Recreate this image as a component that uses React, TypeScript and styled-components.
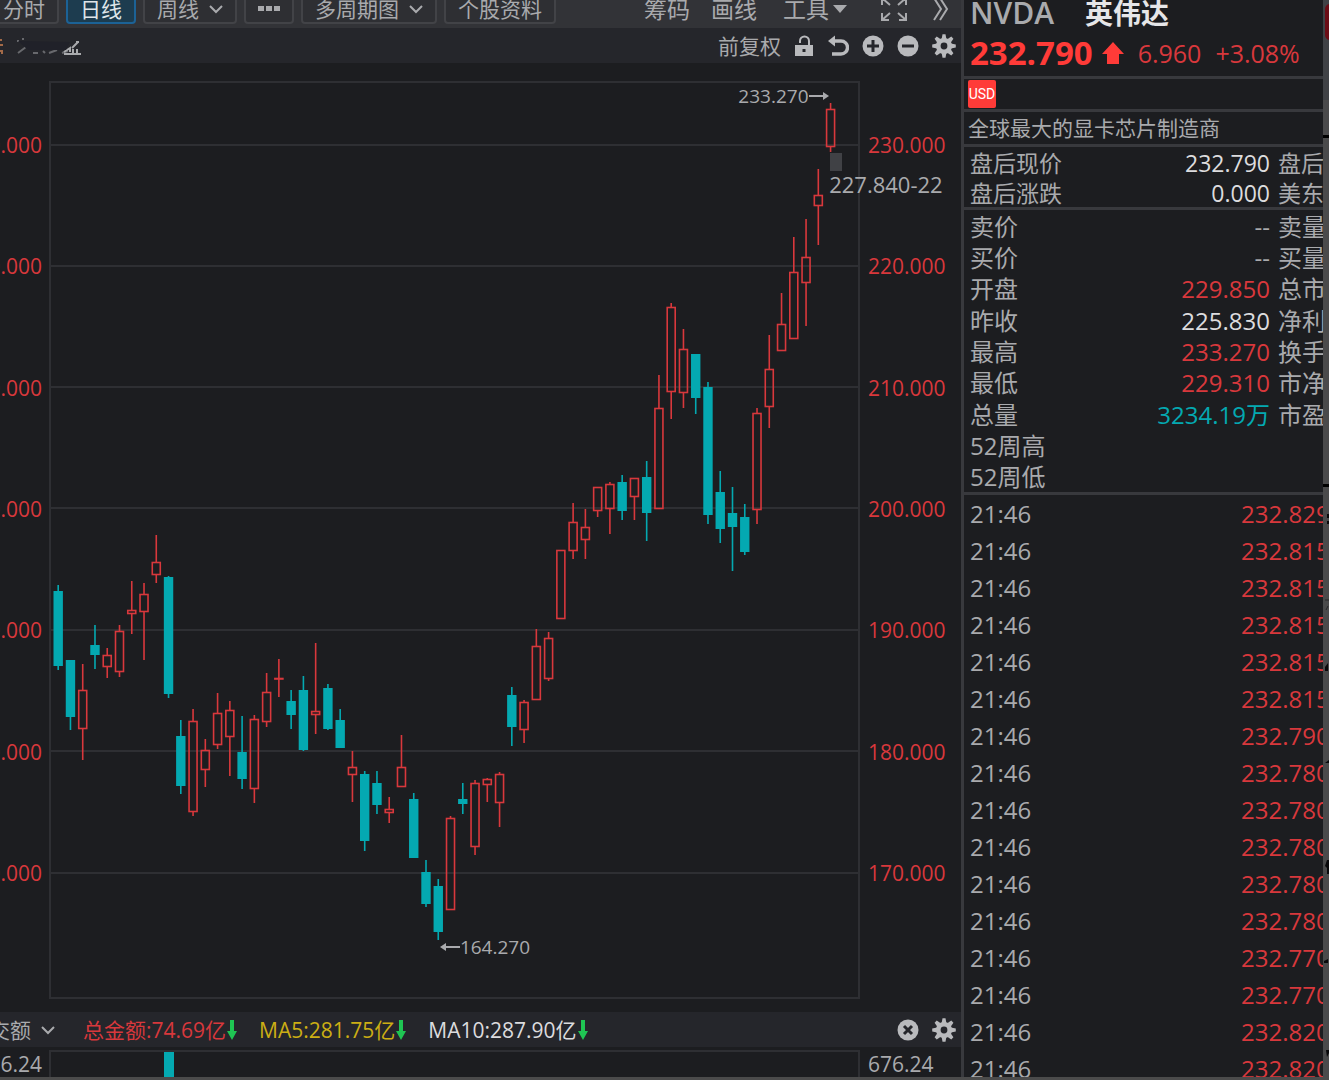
import React from "react";
import styled, { createGlobalStyle } from "styled-components";

const color = {
  bg: "#1c1d20",
  bar: "#25262b",
  toolbar: "#323337",
  line: "#38393d",
  grid: "#2e2f33",
  text: "#a9aaad",
  bright: "#dcdcde",
  red: "#d8383c",
  hot: "#ff3b38",
  teal: "#04a9b1",
  yellow: "#ccae14",
  green: "#1fc553",
};

const Global = createGlobalStyle`
  * { box-sizing: border-box; }
  body { margin: 0; background: #4b4b4b; }
  button { font: inherit; color: inherit; }
`;

const Screen = styled.div`
  display: grid;
  grid-template-columns: minmax(0, 1fr) 362px 6px;
  height: 100vh;
  padding-bottom: 3px;
  overflow: hidden;
  background: #4b4b4b;
  color: ${color.text};
  font-family: "Open Sans", "Noto Sans CJK SC", sans-serif;
  font-size: 21px;
  line-height: 30px;
  white-space: nowrap;
`;

const Main = styled.main`
  display: flex;
  flex-direction: column;
  min-width: 0;
  min-height: 0;
  background: ${color.bg};
`;

const Toolbar = styled.nav`
  display: flex;
  flex: none;
  align-items: flex-end;
  justify-content: space-between;
  height: 28px;
  padding: 0 12px 4px 0;
  overflow: hidden;
  background: ${color.toolbar};
`;

const Periods = styled.div`
  display: flex;
  gap: 7px;
  margin-left: -11px;
`;

const PeriodButton = styled.button<{ $active?: boolean }>`
  display: flex;
  align-items: center;
  gap: 10px;
  height: 30px;
  padding: 0 12px;
  border: 2px solid ${(p) => (p.$active ? "#1c6296" : "#424347")};
  border-radius: 4px;
  background: ${(p) => (p.$active ? "#1d3c4f" : "#2e2f33")};
  color: ${(p) => (p.$active ? "#dfe5e9" : color.text)};
`;

const Tools = styled.div`
  display: flex;
  align-items: center;
  gap: 21px;
  height: 30px;
  font-size: 23px;
`;

const ToolButton = styled.button`
  display: flex;
  align-items: center;
  gap: 4px;
  padding: 0;
  border: 0;
  background: none;
`;

const ToolGroup = styled.div`
  display: flex;
  align-items: center;
  gap: 26px;
`;

const ToolEnd = styled.div`
  display: flex;
  align-items: center;
  gap: 25px;
  margin-left: 12px;
`;

const PaneBar = styled.div`
  display: flex;
  flex: none;
  align-items: center;
  justify-content: space-between;
  height: 35px;
  padding: 0 5px 0 0;
  background: ${color.bar};
`;

const IconRow = styled.div`
  display: flex;
  align-items: center;
  gap: 13px;
`;

const IconButton = styled.button`
  display: flex;
  padding: 0;
  border: 0;
  background: none;
  color: #b9babd;
`;

const Pane = styled.section`
  display: grid;
  grid-template-columns: 49px minmax(0, 1fr) 101px;
  flex: 1;
  min-height: 0;
`;

const Axis = styled.div<{ $side: "left" | "right" }>`
  display: flex;
  flex-direction: column;
  align-items: ${(p) => (p.$side === "left" ? "flex-end" : "flex-start")};
  justify-content: space-between;
  padding: ${(p) => (p.$side === "left" ? "67px 7px 124px 0" : "67px 0 124px 8px")};
  overflow: hidden;
  color: ${color.red};
`;

const Plot = styled.div`
  position: relative;
  margin: 18px 0 13px;
  min-height: 0;
`;

const Canvas = styled.svg`
  display: block;
  width: 100%;
  height: 100%;
`;

const Mark = styled.div<{ $left: string; $top: string; $large?: boolean }>`
  position: absolute;
  left: ${(p) => p.$left};
  top: ${(p) => p.$top};
  display: flex;
  align-items: center;
  font-size: ${(p) => (p.$large ? 22 : 19)}px;
`;

const VolumePane = styled.section`
  display: grid;
  grid-template-columns: 49px minmax(0, 1fr) 101px;
  flex: none;
  height: 30px;
  overflow: hidden;
`;

const VolumePlot = styled.div`
  margin-top: 3px;
  border: 2px solid ${color.grid};
  border-bottom: 0;
  padding-left: 113px;
`;

const VolumeBar = styled.div`
  width: 10px;
  height: 27px;
  background: ${color.teal};
`;

const VolumeLabel = styled.div<{ $side: "left" | "right" }>`
  display: flex;
  justify-content: ${(p) => (p.$side === "left" ? "flex-end" : "flex-start")};
  padding: ${(p) => (p.$side === "left" ? "2px 7px 0 0" : "2px 0 0 8px")};
`;

const Legend = styled.div`
  display: flex;
  align-items: center;
  gap: 22px;
`;

const LegendSelect = styled.button`
  display: flex;
  align-items: center;
  gap: 10px;
  margin-left: -32px;
  padding: 0 6px 0 0;
  border: 0;
  background: none;
`;

const LegendItem = styled.span<{ $color: string }>`
  display: flex;
  align-items: center;
  gap: 1px;
  color: ${(p) => p.$color};
`;

const Side = styled.aside`
  display: flex;
  flex-direction: column;
  min-height: 0;
  overflow: hidden;
  border-left: 3px solid ${color.line};
  background: ${color.bg};
`;

const SideBlock = styled.div<{ $height: number }>`
  display: flex;
  flex: none;
  align-items: center;
  height: ${(p) => p.$height}px;
  padding-left: 4px;
  border-bottom: 3px solid ${color.line};
`;

const Head = styled.header`
  flex: none;
  padding-left: 6px;
  border-bottom: 3px solid ${color.line};
`;

const NameRow = styled.div`
  display: flex;
  align-items: center;
  gap: 31px;
  height: 26px;
  line-height: 26px;
`;

const Ticker = styled.span`
  font-size: 30px;
  font-weight: 600;
`;

const Company = styled.h1`
  margin: 0;
  color: #e6e6e8;
  font-size: 28px;
  font-weight: 700;
`;

const PriceRow = styled.div`
  display: flex;
  align-items: center;
  gap: 9px;
  height: 50px;
  padding-top: 4px;
  color: ${color.red};
  font-size: 25px;
`;

const Price = styled.strong`
  color: ${color.hot};
  font-size: 33px;
`;

const Change = styled.span`
  margin-left: 5px;
`;

const Currency = styled.span`
  width: 28px;
  height: 28px;
  border-radius: 2px;
  background: ${color.hot};
  color: #fff;
  font-family: "Liberation Sans Narrow", "Roboto", sans-serif;
  font-size: 14px;
  line-height: 28px;
  text-align: center;
`;

const Quotes = styled.table<{ $height: number; $size: number }>`
  flex: none;
  width: 100%;
  height: ${(p) => p.$height}px;
  table-layout: fixed;
  border-collapse: collapse;
  border-bottom: 3px solid ${color.line};
  font-size: ${(p) => p.$size}px;
`;

const QuoteLabel = styled.th`
  width: 110px;
  padding: 2px 0 0 6px;
  font-weight: 400;
  line-height: 28px;
  text-align: left;
`;

const QuoteValue = styled.td<{ $color?: string }>`
  padding: 2px 0 0;
  color: ${(p) => p.$color || color.text};
  line-height: 28px;
  text-align: right;
`;

const QuoteNext = styled.th`
  width: 53px;
  padding: 2px 0 0 8px;
  overflow: hidden;
  font-weight: 400;
  line-height: 28px;
  text-align: left;
`;

const TickArea = styled.div`
  flex: 1;
  min-height: 0;
  overflow: hidden;
`;

const Ticks = styled.table`
  width: 100%;
  table-layout: fixed;
  border-collapse: collapse;
  font-size: 24px;
`;

const TickTime = styled.td`
  height: 37px;
  padding: 0 0 0 6px;
`;

const TickPrice = styled.td`
  width: 82px;
  padding: 0;
  overflow: hidden;
  color: ${color.red};
`;

const Edge = styled.div`
  overflow: hidden;
  background: #4a4a4b;
`;

type Candle = [number, number, number, number, number];

// Each entry: high, body top, body bottom, low (in plot units), 1 = rising day.
const candles: Candle[] = [
  [585, 591, 666, 670, 0], [660, 660, 717, 730, 0], [664, 690, 729, 760, 1], [625, 645, 655, 669, 0],
  [648, 655, 667, 678, 1], [625, 631, 672, 677, 1], [581, 610, 614, 634, 1], [583, 594, 612, 660, 1],
  [535, 562, 575, 583, 1], [576, 577, 694, 698, 0], [720, 736, 786, 794, 0], [709, 721, 812, 816, 1],
  [739, 750, 770, 787, 1], [693, 713, 745, 749, 1], [701, 710, 737, 776, 1], [716, 752, 779, 789, 0],
  [715, 719, 789, 803, 1], [673, 692, 722, 727, 1], [659, 678, 679, 697, 1], [690, 701, 715, 729, 0],
  [676, 690, 750, 751, 0], [643, 711, 715, 734, 1], [684, 688, 729, 730, 0], [709, 720, 748, 748, 0],
  [751, 767, 775, 802, 1], [771, 774, 841, 851, 0], [771, 783, 805, 814, 0], [797, 809, 813, 823, 1],
  [735, 767, 787, 787, 1], [793, 799, 858, 858, 0], [860, 872, 904, 907, 0], [879, 886, 932, 940, 0],
  [816, 818, 910, 910, 1], [783, 799, 804, 814, 0], [780, 783, 847, 855, 1], [778, 779, 785, 802, 1],
  [772, 774, 803, 827, 1], [687, 695, 727, 746, 0], [700, 702, 730, 743, 1], [629, 646, 700, 700, 1],
  [632, 638, 679, 681, 1], [550, 550, 619, 619, 1], [503, 522, 551, 559, 1], [509, 527, 540, 559, 1],
  [487, 487, 511, 517, 1], [482, 484, 509, 534, 1], [475, 482, 511, 520, 0], [478, 478, 497, 520, 1],
  [461, 477, 513, 541, 0], [375, 408, 509, 509, 1], [303, 307, 392, 419, 1], [329, 349, 393, 408, 1],
  [354, 354, 398, 414, 0], [382, 387, 515, 524, 0], [471, 492, 529, 543, 0], [487, 513, 527, 571, 0],
  [504, 517, 552, 555, 0], [408, 413, 510, 524, 1], [335, 369, 407, 428, 1], [293, 324, 351, 351, 1],
  [237, 272, 339, 339, 1], [219, 257, 283, 326, 1], [169, 195, 206, 245, 1], [103, 109, 147, 152, 1],
];

const gridLines = [145, 266, 387, 508, 630, 751, 873];
const levels = ["230.000", "220.000", "210.000", "200.000", "190.000", "180.000", "170.000"];

const afterHours = [
  ["盘后现价", "232.790", "盘后"],
  ["盘后涨跌", "0.000", "美东"],
];

const quotes: [string, string, string, string?][] = [
  ["卖价", "--", "卖量"],
  ["买价", "--", "买量"],
  ["开盘", "229.850", "总市", color.red],
  ["昨收", "225.830", "净利", color.bright],
  ["最高", "233.270", "换手", color.red],
  ["最低", "229.310", "市净", color.red],
  ["总量", "3234.19万", "市盈", color.teal],
  ["52周高", "", ""],
  ["52周低", "", ""],
];

const ticks = [
  "232.829", "232.815", "232.815", "232.815", "232.815", "232.815", "232.790", "232.780",
  "232.780", "232.780", "232.780", "232.780", "232.770", "232.770", "232.820", "232.820",
];

const Chevron = () => (
  <svg width="14" height="10" viewBox="0 0 14 10" fill="none" stroke="currentColor" strokeWidth="2">
    <path d="M1 2l6 6 6-6" />
  </svg>
);

const Gear = () => (
  <svg width="24" height="24" viewBox="-12 -12 24 24">
    {[0, 45, 90, 135].map((a) => (
      <path key={a} transform={`rotate(${a})`} d="M-2.4 -7L-1.5 -11.8H1.5L2.4 -7V7L1.5 11.8H-1.5L-2.4 7z" fill="currentColor" />
    ))}
    <circle r="8" fill="currentColor" />
    <circle r="3.4" fill={color.bar} />
  </svg>
);

const Disc = ({ d }: { d: string }) => (
  <svg width="22" height="22" viewBox="0 0 22 22">
    <circle cx="11" cy="11" r="10.5" fill="currentColor" />
    <path d={d} stroke={color.bar} strokeWidth="3" />
  </svg>
);

const Lock = () => (
  <svg width="20" height="22" viewBox="0 0 20 22">
    <path d="M6 8V6a4.5 4.5 0 0 1 9 0v4" fill="none" stroke="currentColor" strokeWidth="2" />
    <path d="M1 10h18v11H1z" fill="currentColor" />
    <rect x="8.500" y="14" width="3" height="3" fill={color.bar} />
  </svg>
);

const Undo = () => (
  <svg width="22" height="22" viewBox="0 0 22 22">
    <path d="M5 6h9a6.200 6.200 0 0 1 0 13H5" fill="none" stroke="currentColor" strokeWidth="3.4" />
    <path d="M1 6l7-5.500v11z" fill="currentColor" />
  </svg>
);

const Down = () => (
  <svg width="10" height="22" viewBox="0 0 10 22" fill={color.green}>
    <path d="M3 1h4v11h3L5 21 0 12h3z" />
  </svg>
);

const Redacted = () => (
  <svg width="84" height="24" viewBox="0 0 84 24" fill="none">
    <path d="M0 6h2M0 11h3M0 17h2v3" stroke="#a36a48" strokeWidth="2" />
    <path d="M17 7h2M22 5h2M18 19l8-6M33 19h5M43 17l2 2M49 19l8-3M62 19l6-2" stroke="#68696d" strokeWidth="2" />
    <path d="M64 18l6-4v4M73 15v5M77 15v5M64 20h17M72 14l6-6M76 8h3" stroke="#a9aaad" strokeWidth="2" />
    <path d="M18 7l52 1-4 8H28z" fill="#202129" />
  </svg>
);

export default function App() {
  return (
    <>
      <Global />
      <Screen>
        <Main>
          <Toolbar>
            <Periods>
              <PeriodButton>分时</PeriodButton>
              <PeriodButton $active>日线</PeriodButton>
              <PeriodButton>周线<Chevron /></PeriodButton>
              <PeriodButton aria-label="更多周期">
                <svg width="22" height="6" viewBox="0 0 22 6" fill="currentColor">
                  <rect width="6" height="5" /><rect x="8" width="6" height="5" /><rect x="16" width="6" height="5" />
                </svg>
              </PeriodButton>
              <PeriodButton>多周期图<Chevron /></PeriodButton>
              <PeriodButton>个股资料</PeriodButton>
            </Periods>
            <Tools>
              <ToolButton>筹码</ToolButton>
              <ToolGroup>
                <ToolButton>画线</ToolButton>
                <ToolButton>
                  工具
                  <svg width="14" height="8" viewBox="0 0 14 8" fill="currentColor"><path d="M0 0h14L7 8z" /></svg>
                </ToolButton>
              </ToolGroup>
              <ToolEnd>
                <ToolButton aria-label="全屏">
                  <svg width="28" height="26" viewBox="0 0 28 26" fill="none" stroke="currentColor" strokeWidth="2">
                    <path d="M10 9L2 2M2 9V2h7M18 9l8-7M19 2h7v7M10 17l-8 7M2 17v7h7M18 17l8 7M26 17v7h-7" />
                  </svg>
                </ToolButton>
                <ToolButton aria-label="展开">
                  <svg width="16" height="24" viewBox="0 0 16 24" fill="none" stroke="currentColor" strokeWidth="2">
                    <path d="M1 1l7 11-7 11M7 1l7 11-7 11" />
                  </svg>
                </ToolButton>
              </ToolEnd>
            </Tools>
          </Toolbar>

          <PaneBar>
            <Redacted />
            <IconRow>
              <span>前复权</span>
              <IconButton aria-label="解锁"><Lock /></IconButton>
              <IconButton aria-label="撤销"><Undo /></IconButton>
              <IconButton aria-label="放大"><Disc d="M11 5v12M5 11h12" /></IconButton>
              <IconButton aria-label="缩小"><Disc d="M5 11h12" /></IconButton>
              <IconButton aria-label="设置"><Gear /></IconButton>
            </IconRow>
          </PaneBar>

          <Pane>
            <Axis $side="left">{levels.map((l) => <span key={l}>{l}</span>)}</Axis>
            <Plot>
              <Canvas viewBox="49 81 811 918" preserveAspectRatio="none">
                <rect x="50" y="82" width="809" height="916" fill="none" stroke={color.grid} strokeWidth="2" />
                {gridLines.map((y) => (
                  <path key={y} d={`M50 ${y}H860`} stroke={color.grid} strokeWidth="2" />
                ))}
                <rect x="830" y="153" width="12" height="18" fill="#404145" />
                {candles.map(([high, top, bottom, low, up], i) => {
                  const x = 58.2 + i * 12.26;
                  return up ? (
                    <g key={i} stroke={color.red} strokeWidth="1.6" fill="none">
                      <path d={`M${x} ${high}V${top}M${x} ${bottom}V${low}`} />
                      <rect x={x - 4} y={top + 0.5} width="8" height={Math.max(bottom - top - 1, 0.5)} />
                    </g>
                  ) : (
                    <g key={i} fill={color.teal}>
                      <rect x={x - 0.8} y={high} width="1.6" height={low - high} />
                      <rect x={x - 4.7} y={top} width="9.4" height={bottom - top} />
                    </g>
                  );
                })}
              </Canvas>
              <Mark $left="85%" $top="0">
                233.270
                <svg width="20" height="8" viewBox="0 0 20 8" fill="currentColor"><path d="M0 3h14V0l6 4-6 4V5H0z" /></svg>
              </Mark>
              <Mark $left="96.2%" $top="9.6%" $large>227.840-22</Mark>
              <Mark $left="48.2%" $top="92.7%">
                <svg width="20" height="8" viewBox="0 0 20 8" fill="currentColor"><path d="M20 3H6V0L0 4l6 4V5h14z" /></svg>
                164.270
              </Mark>
            </Plot>
            <Axis $side="right">{levels.map((l) => <span key={l}>{l}</span>)}</Axis>
          </Pane>

          <PaneBar>
            <Legend>
              <LegendSelect>成交额<Chevron /></LegendSelect>
              <LegendItem $color={color.red}>总金额:74.69亿<Down /></LegendItem>
              <LegendItem $color={color.yellow}>MA5:281.75亿<Down /></LegendItem>
              <LegendItem $color={color.bright}>MA10:287.90亿<Down /></LegendItem>
            </Legend>
            <IconRow>
              <IconButton aria-label="关闭"><Disc d="M7 7l8 8M15 7l-8 8" /></IconButton>
              <IconButton aria-label="指标设置"><Gear /></IconButton>
            </IconRow>
          </PaneBar>
          <VolumePane>
            <VolumeLabel $side="left">676.24</VolumeLabel>
            <VolumePlot><VolumeBar /></VolumePlot>
            <VolumeLabel $side="right">676.24</VolumeLabel>
          </VolumePane>
        </Main>

        <Side>
          <Head>
            <NameRow>
              <Ticker>NVDA</Ticker>
              <Company>英伟达</Company>
            </NameRow>
            <PriceRow>
              <Price>232.790</Price>
              <svg width="22" height="24" viewBox="0 0 22 24" fill={color.hot}><path d="M11 1l11 12h-5v10H5V13H0z" /></svg>
              <Change>6.960</Change>
              <Change>+3.08%</Change>
            </PriceRow>
          </Head>
          <SideBlock $height={33}><Currency>USD</Currency></SideBlock>
          <SideBlock $height={35}>全球最大的显卡芯片制造商</SideBlock>
          <Quotes $height={63} $size={23}>
            <tbody>
              {afterHours.map(([label, value, next]) => (
                <tr key={label}>
                  <QuoteLabel scope="row">{label}</QuoteLabel>
                  <QuoteValue $color={color.bright}>{value}</QuoteValue>
                  <QuoteNext scope="row">{next}</QuoteNext>
                </tr>
              ))}
            </tbody>
          </Quotes>
          <Quotes $height={285} $size={24}>
            <tbody>
              {quotes.map(([label, value, next, tone]) => (
                <tr key={label}>
                  <QuoteLabel scope="row">{label}</QuoteLabel>
                  <QuoteValue $color={tone}>{value}</QuoteValue>
                  <QuoteNext scope="row">{next}</QuoteNext>
                </tr>
              ))}
            </tbody>
          </Quotes>
          <TickArea>
            <Ticks>
              <tbody>
                {ticks.map((price, i) => (
                  <tr key={i}>
                    <TickTime>21:46</TickTime>
                    <TickPrice>{price}</TickPrice>
                  </tr>
                ))}
              </tbody>
            </Ticks>
          </TickArea>
        </Side>

        <Edge>
          <svg width="6" height="1077" viewBox="0 0 6 1077">
            <rect width="6" height="100" fill="#404246" />
            <rect x="2" y="4" width="12" height="36" rx="5" fill="#6b0d16" />
            <path d="M0 136.500h6M0 485.500h6" stroke="#000" strokeWidth="3" />
            <path d="M4 514h2v4H4zM4 521h2v3H4zM2 667l3-4v8H2zM2 763l4-3v3zM2 866l2-6h2v14H4v-6zM1 961l4-2v4H1zM3 1050h3v3l-2 4z" fill="#08080a" />
            <path d="M2 600h4M3 610l2-4" stroke="#26262a" />
          </svg>
        </Edge>
      </Screen>
    </>
  );
}
